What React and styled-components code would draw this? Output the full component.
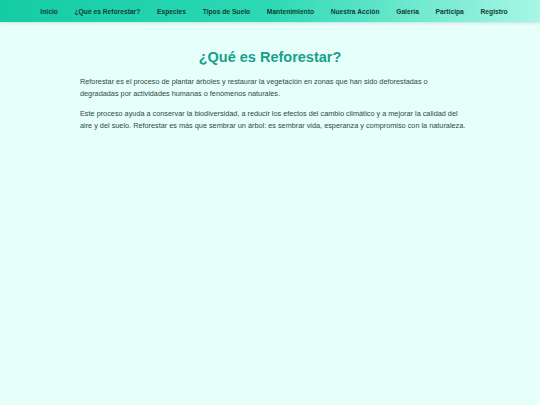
import React from "react";
import styled, { createGlobalStyle } from "styled-components";

const GlobalStyle = createGlobalStyle`
  html, body {
    margin: 0;
    padding: 0;
    background: #e6fffa;
    font-family: "Liberation Sans", Arial, sans-serif;
  }
`;

const Page = styled.div`
  min-height: 405px;
  background: #e6fffa;
`;

const Nav = styled.nav`
  height: 22px;
  display: flex;
  align-items: center;
  justify-content: center;
  gap: 16.7px;
  padding-left: 8px;
  background: linear-gradient(90deg, #14cca4 0%, #2dd9b4 50%, #a8f6e6 100%);
  box-shadow: 0 1px 3px rgba(0, 0, 0, 0.12);
`;

const NavLink = styled.a`
  font-size: 6.7px;
  font-weight: bold;
  color: #123d33;
  text-decoration: none;
  white-space: nowrap;
  cursor: pointer;
`;

const Section = styled.section`
  max-width: 394px;
  margin: 0 auto;
  padding-top: 27px;
`;

const Title = styled.h2`
  margin: 0 0 11px;
  text-align: center;
  font-size: 14.5px;
  font-weight: bold;
  color: #17a08a;
`;

const Text = styled.p`
  margin: 0 0 8px;
  padding: 0 0.5px 0 7px;
  font-size: 7.3px;
  line-height: 12px;
  color: #2a4a42;
`;

const links = [
  "Inicio",
  "¿Qué es Reforestar?",
  "Especies",
  "Tipos de Suelo",
  "Mantenimiento",
  "Nuestra Acción",
  "Galería",
  "Participa",
  "Registro",
];

const App = () => {
  return (
    <Page>
      <GlobalStyle />
      <Nav>
        {links.map((l) => (
          <NavLink key={l}>{l}</NavLink>
        ))}
      </Nav>
      <Section>
        <Title>¿Qué es Reforestar?</Title>
        <Text>
          Reforestar es el proceso de plantar árboles y restaurar la vegetación en zonas que han sido deforestadas o degradadas por actividades humanas o fenómenos naturales.
        </Text>
        <Text>
          Este proceso ayuda a conservar la biodiversidad, a reducir los efectos del cambio climático y a mejorar la calidad del aire y del suelo. Reforestar es más que sembrar un árbol: es sembrar vida, esperanza y compromiso con la naturaleza.
        </Text>
      </Section>
    </Page>
  );
};

export default App;
